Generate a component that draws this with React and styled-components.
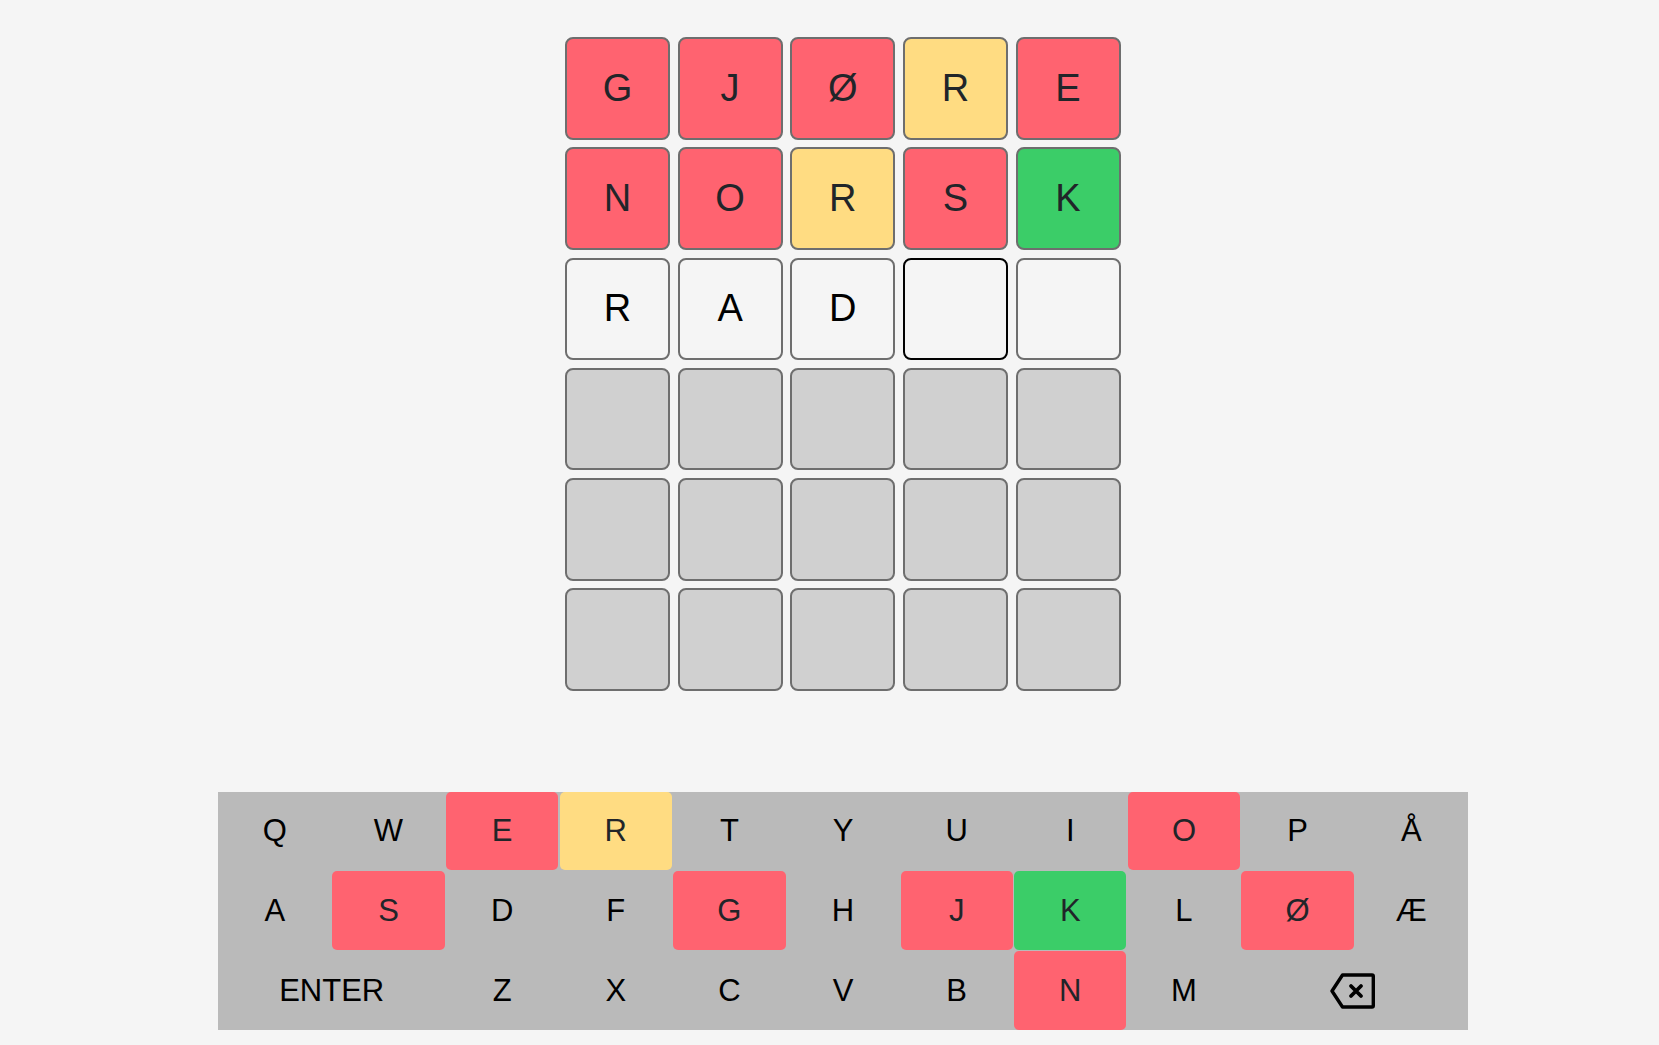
import styled, { createGlobalStyle } from 'styled-components';

const GlobalStyle = createGlobalStyle`
    html, body {
        margin: 0;
        background-color: #f5f5f5;
        font-family: "Liberation Sans", Arial, sans-serif;
    }
`

const colors = {
    absent: '#ff6370',
    present: '#ffdc82',
    correct: '#3bcd68',
}

const Page = styled.div`
    display: flex;
    flex-direction: column;
    align-items: center;
    box-sizing: border-box;
    height: 1045px;
    padding: 37px 0 0 26.5px;
    gap: 101px;
`

const Board = styled.div`
    display: grid;
    width: 555.5px;
    height: 654px;
    grid-template-columns: repeat(5, 1fr);
    grid-template-rows: repeat(6, 1fr);
    column-gap: 7.75px;
    row-gap: 7.7px;
`

const Tile = styled.div`
    display: flex;
    align-items: center;
    justify-content: center;
    box-sizing: border-box;
    border: 2px solid ${p => p.$active ? '#000' : '#6e6e6e'};
    border-radius: 8px;
    font-size: 38px;
    color: ${p => p.$status ? '#212529' : '#000'};
    background-color: ${p => p.$locked ? '#d0d0d0' : (colors[p.$status] || 'transparent')};
`

const Keyboard = styled.div`
    display: grid;
    box-sizing: border-box;
    width: 1250px;
    margin-left: 0.6px;
    padding: 0 0.65px;
    grid-template-columns: repeat(11, 1fr);
    grid-template-rows: 78px 79px 79px;
    column-gap: 1.3px;
    row-gap: 1px;
    background-color: #bababa;
`

const Key = styled.div`
    grid-column: span ${p => p.$span || 1};
    display: flex;
    align-items: center;
    justify-content: center;
    border-radius: 5px;
    font-size: 31px;
    color: ${p => p.$status ? '#212529' : '#000'};
    background-color: ${p => colors[p.$status] || 'transparent'};
`

const BackspaceIcon = () => (
    <svg width="48" height="36" viewBox="0 0 48 36" fill="none" stroke="#000" strokeWidth="3.4" strokeLinejoin="round" strokeLinecap="round">
        <path d="M12.500 2 H42 Q43.300 2 43.300 3.300 V32.700 Q43.300 34 42 34 H12.500 L2 18 Z" />
        <path d="M21 13 L31 23 M31 13 L21 23" strokeWidth="3.800" />
    </svg>
)

const guesses = [
    [['G', 'absent'], ['J', 'absent'], ['Ø', 'absent'], ['R', 'present'], ['E', 'absent']],
    [['N', 'absent'], ['O', 'absent'], ['R', 'present'], ['S', 'absent'], ['K', 'correct']],
]

const keyStatus = {
    E: 'absent', R: 'present', O: 'absent', S: 'absent', G: 'absent',
    J: 'absent', K: 'correct', Ø: 'absent', N: 'absent',
}

const App = () => {
    return (
        <Page>
            <GlobalStyle />
            <Board>
                {guesses.flat().map(([letter, status], i) => (
                    <Tile key={i} $status={status}>{letter}</Tile>
                ))}
                <Tile>R</Tile>
                <Tile>A</Tile>
                <Tile>D</Tile>
                <Tile $active />
                <Tile />
                {Array.from({ length: 15 }, (_, i) => <Tile key={i} $locked />)}
            </Board>
            <Keyboard>
                {'QWERTYUIOPÅASDFGHJKLØÆ'.split('').map(k => (
                    <Key key={k} $status={keyStatus[k]}>{k}</Key>
                ))}
                <Key $span={2}>ENTER</Key>
                {'ZXCVBNM'.split('').map(k => (
                    <Key key={k} $status={keyStatus[k]}>{k}</Key>
                ))}
                <Key $span={2}><BackspaceIcon /></Key>
            </Keyboard>
        </Page>
    );
};

export default App;
